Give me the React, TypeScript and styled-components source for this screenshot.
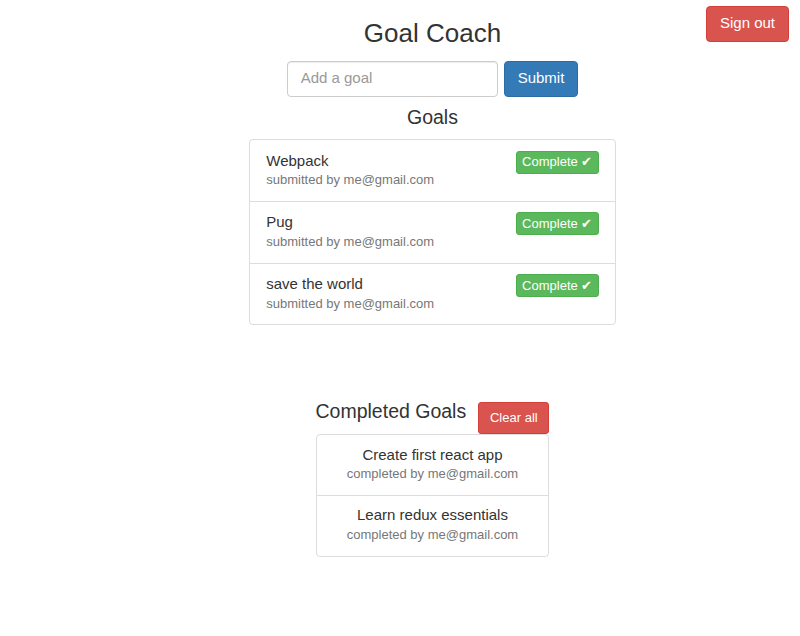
import { FC } from "react";
import styled, { createGlobalStyle, css } from "styled-components";


type Goal = {
    title: string;
    email: string;
};

const goals: Goal[] = [
    { title: "Webpack", email: "me@gmail.com" },
    { title: "Pug", email: "me@gmail.com" },
    { title: "save the world", email: "me@gmail.com" },
];

const completedGoals: Goal[] = [
    { title: "Create first react app", email: "me@gmail.com" },
    { title: "Learn redux essentials", email: "me@gmail.com" },
];

const App: FC = () => {
    return <Page>
        <GlobalStyle />
        <SignOutButton variant="danger">Sign out</SignOutButton>

        <Main>
            <Title>Goal Coach</Title>

            <AddGoalForm onSubmit={e => e.preventDefault()}>
                <GoalInput type="text" placeholder="Add a goal" />
                <Button variant="primary" type="submit">Submit</Button>
            </AddGoalForm>

            <SectionTitle>Goals</SectionTitle>
            <GoalList>
                {goals.map(goal => (
                    <GoalItem key={goal.title}>
                        <GoalText>
                            <GoalTitle>{goal.title}</GoalTitle>
                            <GoalMeta>submitted by {goal.email}</GoalMeta>
                        </GoalText>
                        <CompleteButton>Complete ✔</CompleteButton>
                    </GoalItem>
                ))}
            </GoalList>

            <CompletedSection>
                <CompletedHeader>
                    <CompletedTitle>Completed Goals</CompletedTitle>
                    <ClearButton>Clear all</ClearButton>
                </CompletedHeader>
                <CompletedList>
                    {completedGoals.map(goal => (
                        <CompletedItem key={goal.title}>
                            <GoalTitle>{goal.title}</GoalTitle>
                            <GoalMeta>completed by {goal.email}</GoalMeta>
                        </CompletedItem>
                    ))}
                </CompletedList>
            </CompletedSection>
        </Main>
    </Page>;
};

export default App;


const GlobalStyle = createGlobalStyle`
    * {
        box-sizing: border-box;
    }

    body {
        margin: 0;
        background: #fff;
        color: #333;
        font-family: "Liberation Sans", Arial, Helvetica, sans-serif;
        font-size: 15px;
        line-height: 1.428571;
    }
`;

type Variant = "primary" | "danger" | "success";

const variants: Record<Variant, ReturnType<typeof css>> = {
    primary: css`
        background-color: #337ab7;
        border-color: #2e6da4;
    `,
    danger: css`
        background-color: #d9534f;
        border-color: #d43f3a;
    `,
    success: css`
        background-color: #5cb85c;
        border-color: #4cae4c;
    `,
};

const Page = styled.div`
    position: relative;
    min-height: 636px;
    padding-left: 65px;
`;

const Main = styled.div`
    display: flex;
    flex-flow: column nowrap;
    align-items: center;
`;

const Button = styled.button<{ variant: Variant }>`
    font-family: inherit;
    font-size: 15px;
    line-height: 21.6px;
    height: 36px;
    padding: 5px 13px 7px;
    color: #fff;
    border: 1px solid transparent;
    border-radius: 4px;
    cursor: pointer;
    white-space: nowrap;
    ${({ variant }) => variants[variant]}
`;

const SignOutButton = styled(Button)`
    position: absolute;
    top: 6px;
    right: 11px;
    width: 83px;
`;

const Title = styled.h3`
    margin: 19px 0 13px;
    font-size: 26px;
    font-weight: 400;
    line-height: 28.6px;
    color: #333;
`;

const AddGoalForm = styled.form`
    display: flex;
    flex-flow: row nowrap;
    align-items: center;
    gap: 6px;
`;

const GoalInput = styled.input`
    width: 211px;
    height: 36px;
    padding: 5px 13px 7px;
    font-family: inherit;
    font-size: 15px;
    color: #555;
    border: 1px solid #ccc;
    border-radius: 4px;
    box-shadow: inset 0 1px 1px rgba(0, 0, 0, 0.075);
    outline: none;

    &::placeholder {
        color: #999;
    }
`;

const SectionTitle = styled.h4`
    margin: 10px 0 11px;
    font-size: 19.5px;
    font-weight: 400;
    line-height: 21.5px;
    color: #333;
`;

const GoalList = styled.div`
    width: 367px;
    display: flex;
    flex-flow: column nowrap;
`;

const itemBase = css`
    background: #fff;
    border: 1px solid #ddd;
    margin-bottom: -1px;
    padding: 9.6px 16.25px 11.2px;

    &:first-child {
        border-top-left-radius: 4px;
        border-top-right-radius: 4px;
    }

    &:last-child {
        margin-bottom: 0;
        border-bottom-left-radius: 4px;
        border-bottom-right-radius: 4px;
    }
`;

const GoalItem = styled.div`
    ${itemBase}
    display: flex;
    flex-flow: row nowrap;
    justify-content: space-between;
    align-items: flex-start;
`;

const GoalText = styled.div`
    display: flex;
    flex-flow: column nowrap;
`;

const GoalTitle = styled.div`
    font-size: 15px;
    line-height: 21.4px;
    color: #333;
`;

const GoalMeta = styled.div`
    font-size: 13px;
    line-height: 18.6px;
    color: #777;
`;

const CompleteButton = styled.button`
    margin-top: 1px;
    font-family: inherit;
    font-size: 13px;
    line-height: 19.5px;
    height: 23px;
    padding: 0 5.4px 1px;
    color: #fff;
    background-color: #5cb85c;
    border: 1px solid #4cae4c;
    border-radius: 3px;
    cursor: pointer;
    white-space: nowrap;
`;

const CompletedSection = styled.div`
    margin-top: 77px;
    width: fit-content;
    display: flex;
    flex-flow: column nowrap;
`;

const CompletedHeader = styled.div`
    display: flex;
    flex-flow: row nowrap;
    align-items: flex-start;
    gap: 12px;
`;

const CompletedTitle = styled.h4`
    margin: -1px 0 0;
    font-size: 19.5px;
    font-weight: 400;
    line-height: 21.5px;
    color: #333;
    white-space: nowrap;
`;

const ClearButton = styled.button`
    font-family: inherit;
    font-size: 13px;
    line-height: 19.5px;
    height: 32px;
    padding: 4.4px 10.8px 6.4px;
    color: #fff;
    background-color: #d9534f;
    border: 1px solid #d43f3a;
    border-radius: 3px;
    cursor: pointer;
    white-space: nowrap;
`;

const CompletedList = styled.div`
    display: flex;
    flex-flow: column nowrap;
`;

const CompletedItem = styled.div`
    ${itemBase}
    padding-top: 8.4px;
    text-align: center;
`;
